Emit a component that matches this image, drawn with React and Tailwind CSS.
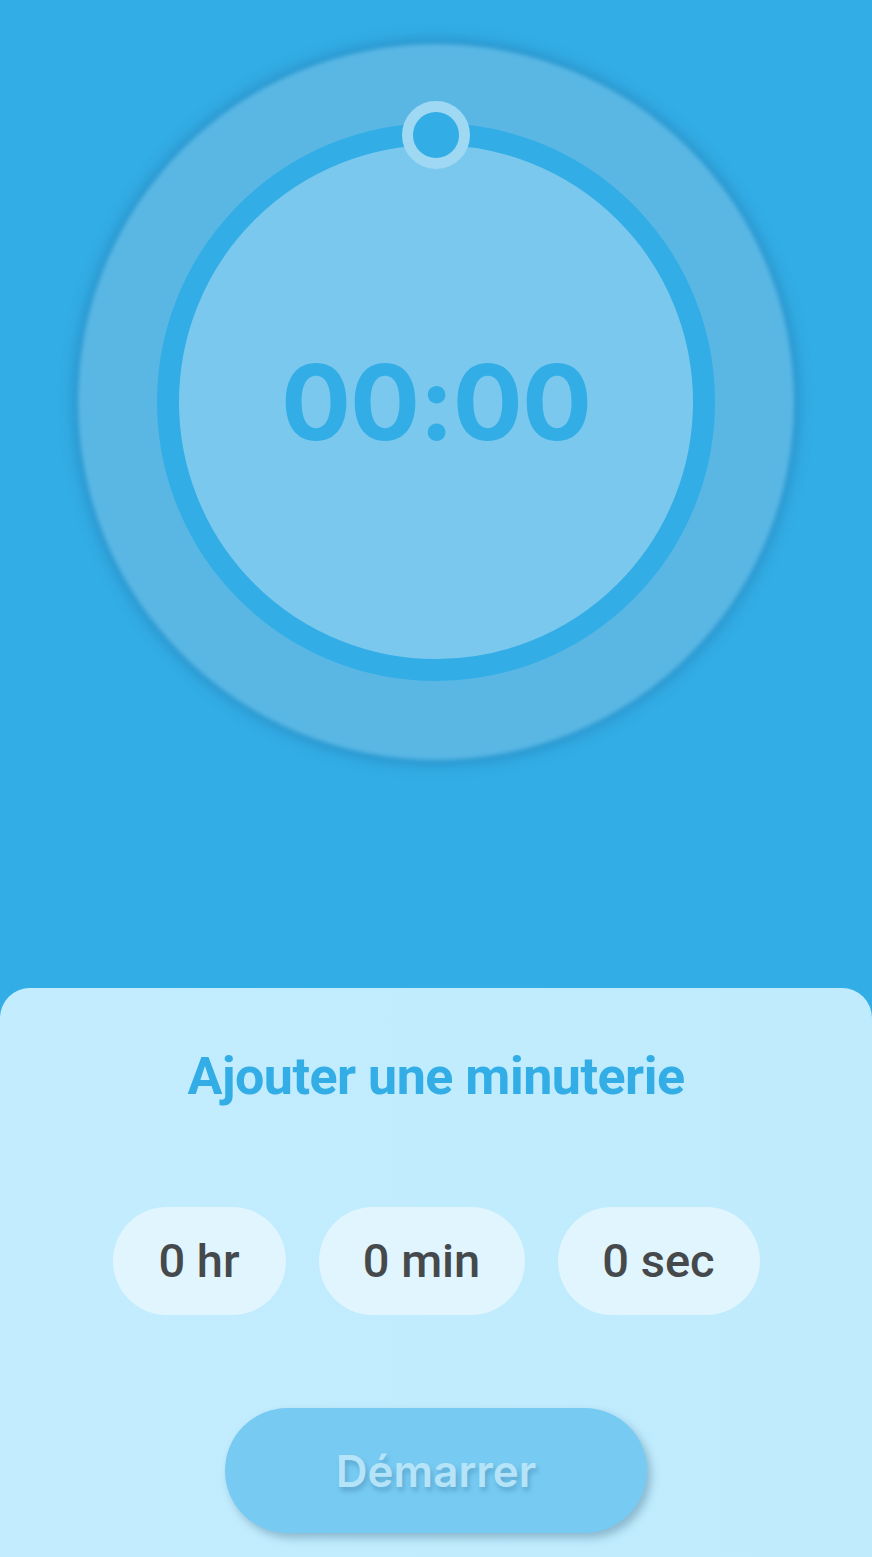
import { useState } from 'react';

const TimePill = ({ label, width }) => (
  <button
    type="button"
    className={`h-[108px] ${width} rounded-full bg-[#e0f5fd] flex items-center justify-center text-[47px] font-medium text-[#45494c] font-['Roboto',sans-serif]`}
  >
    {label}
  </button>
);

const App = () => {
  const [hours] = useState(0);
  const [minutes] = useState(0);
  const [seconds] = useState(0);

  return (
    <div className="w-[872px] h-[1557px] bg-[#33ade6] flex flex-col overflow-hidden font-['Inter',sans-serif]">
      {/* dial */}
      <div className="h-[988px] flex justify-center pt-[44px]">
        <div className="relative w-[716px] h-[716px]">
          <div className="absolute inset-0 rounded-full bg-[#5ab7e4] blur-[2px] shadow-[0_0_14px_4px_rgba(20,90,140,0.35)]" />
          <div className="absolute inset-0 flex items-center justify-center">
            <div className="relative w-[558px] h-[558px] rounded-full border-[22px] border-[#33ade6] bg-[#7bc8ee] flex items-center justify-center">
              <span className="text-[104px] font-bold text-[#33ade6] leading-none tracking-[-1px]">00:00</span>
              <div className="absolute left-1/2 top-[-44px] -translate-x-1/2 w-[68px] h-[68px] rounded-full border-[11px] border-[#9fd8f3] bg-[#33ade6]" />
            </div>
          </div>
        </div>
      </div>

      {/* add timer panel */}
      <div className="flex-1 rounded-t-[30px] bg-gradient-to-r from-[#c3edfe] to-[#bfebfd] flex flex-col items-center">
        <h2 className="mt-[63px] text-[52px] font-bold text-[#33ade6] font-['Roboto',sans-serif] leading-none tracking-[-0.5px]">
          Ajouter une minuterie
        </h2>
        <div className="mt-[104px] flex gap-[33px]">
          <TimePill label={`${hours} hr`} width="w-[173px]" />
          <TimePill label={`${minutes} min`} width="w-[206px]" />
          <TimePill label={`${seconds} sec`} width="w-[202px]" />
        </div>
        <button
          type="button"
          className="mt-[93px] w-[422px] h-[125px] rounded-full bg-[#77cbf3] shadow-[4px_5px_8px_rgba(40,90,120,0.35)] text-[44px] font-semibold text-[#b5e3f8] [text-shadow:2px_4px_5px_rgba(40,100,140,0.35)]"
        >
          Démarrer
        </button>
      </div>
    </div>
  );
};

export default App;
